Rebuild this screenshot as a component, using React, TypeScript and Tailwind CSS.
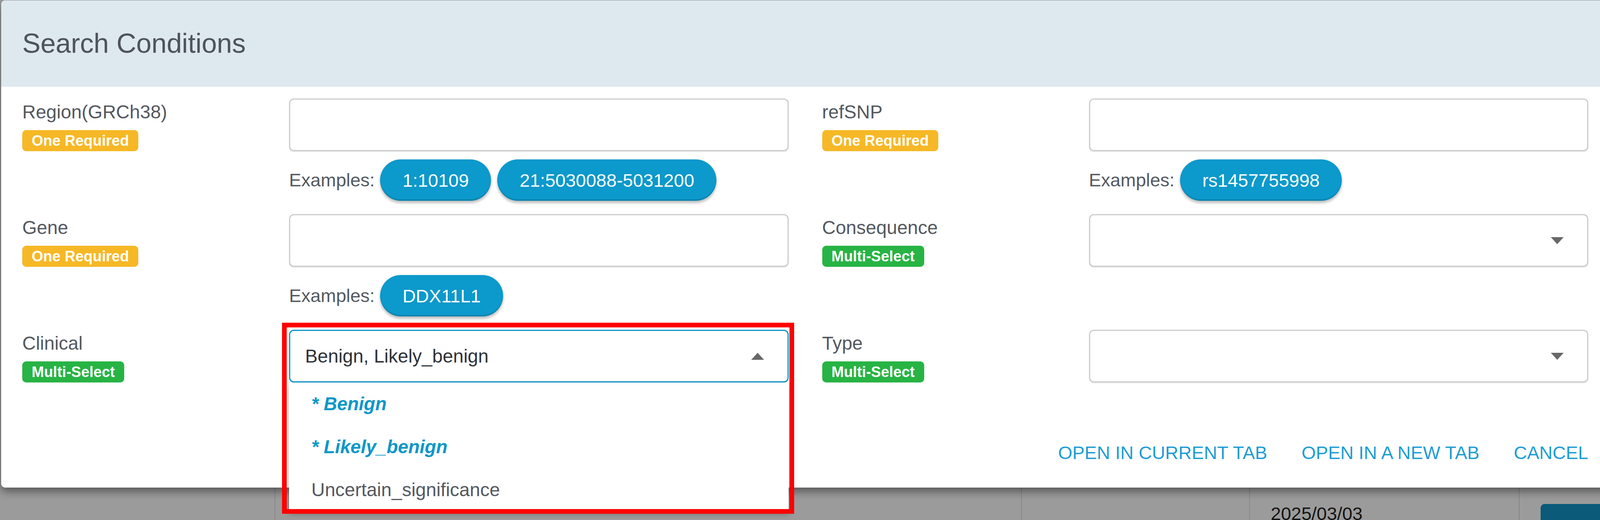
import React from 'react';

const FONT = "font-['Liberation_Sans',Arial,sans-serif]";

type BadgeKind = 'required' | 'multi';

const Badge: React.FC<{ kind: BadgeKind }> = ({ kind }) => (
  <span
    className={`mt-[11px] inline-flex h-[54px] items-center rounded-[10px] px-[24px] text-[38px] font-bold leading-none text-white ${
      kind === 'required' ? 'bg-[#f6b826]' : 'bg-[#27b444]'
    }`}
  >
    {kind === 'required' ? 'One Required' : 'Multi-Select'}
  </span>
);

const Caret: React.FC<{ up?: boolean }> = ({ up }) => (
  <svg width="33" height="18" viewBox="0 0 33 18" className="shrink-0">
    <polygon points={up ? '0,18 33,18 16.5,0' : '0,0 33,0 16.5,18'} fill="#686868" />
  </svg>
);

const TextInput: React.FC = () => (
  <div className="h-[135px] w-full rounded-[12px] border-[3px] border-[#cdcdcd] bg-white shadow-[0_2px_2px_rgba(0,0,0,0.1)]" />
);

const SelectBox: React.FC = () => (
  <div className="flex h-[135px] w-full items-center justify-end rounded-[12px] border-[3px] border-[#cdcdcd] bg-white pr-[60px] shadow-[0_2px_2px_rgba(0,0,0,0.1)]">
    <Caret />
  </div>
);

const Examples: React.FC<{ items: string[] }> = ({ items }) => (
  <div className="mt-[21px] flex items-center">
    <span className="text-[47px] text-[#54595f]">Examples:</span>
    <div className="ml-[14px] flex gap-[16px]">
      {items.map((item) => (
        <span
          key={item}
          className="flex h-[106px] items-center rounded-full bg-[#0c99cb] px-[57px] text-[47px] leading-none text-white shadow-[inset_0_-4px_0_rgba(0,0,0,0.12),0_6px_6px_rgba(0,0,0,0.2),0_2px_10px_rgba(0,0,0,0.1)]"
        >
          {item}
        </span>
      ))}
    </div>
  </div>
);

const Field: React.FC<{ label: string; kind: BadgeKind; children: React.ReactNode }> = ({ label, kind, children }) => (
  <div className="flex">
    <div className="flex w-[683px] shrink-0 flex-col items-start">
      <span className="text-[48px] leading-[70px] text-[#54595f]">{label}</span>
      <Badge kind={kind} />
    </div>
    <div className="min-w-0 flex-1">{children}</div>
  </div>
);

const clinicalOptions = [
  { label: 'Benign', selected: true },
  { label: 'Likely_benign', selected: true },
  { label: 'Uncertain_significance', selected: false },
];

const ClinicalSelect: React.FC = () => (
  <div className="relative">
    <div className="flex h-[135px] w-full items-center justify-between rounded-[12px] border-[3px] border-[#0a96c9] bg-white pl-[38px] pr-[60px]">
      <span className="text-[48px] text-[#2f3338]">Benign, Likely_benign</span>
      <Caret up />
    </div>
    <div className="absolute left-0 right-0 top-full z-10 bg-white shadow-[0_6px_14px_rgba(0,0,0,0.3)]">
      {clinicalOptions.map((opt) => (
        <div key={opt.label} className="flex h-[110px] items-center pl-[57px]">
          {opt.selected ? (
            <span className="text-[47.5px] font-bold italic text-[#0d97c9]">* {opt.label}</span>
          ) : (
            <span className="text-[48px] text-[#54595f]">{opt.label}</span>
          )}
        </div>
      ))}
    </div>
    <div className="pointer-events-none absolute -left-[18px] -top-[18px] z-20 h-[489px] w-[1311px] border-[12px] border-[#ff0000]" />
  </div>
);

export default function App() {
  return (
    <div className={`relative h-[1331px] w-[4125px] overflow-hidden bg-[#9b9b9b] ${FONT}`}>
      {/* page behind the dialog */}
      <div className="flex h-full flex-col justify-end">
        <div className="flex h-[300px]">
          <div className="w-[703px]" />
          <div className="w-[1911px] border-l-[2px] border-[#878787]" />
          <div className="w-[584px] border-l-[2px] border-[#878787]" />
          <div className="w-[690px] border-l-[2px] border-[#878787] pl-[53px] pt-[260px]">
            <span className="text-[47px] leading-none text-[#141414]">2025/03/03</span>
          </div>
          <div className="flex-1 border-l-[2px] border-[#878787] pl-[54px] pt-[259px]">
            <div className="h-[120px] w-full rounded-tl-[10px] bg-[#0b5a79]" />
          </div>
        </div>
      </div>

      {/* dialog */}
      <div className="absolute left-[3px] top-[1px] w-[4118px] rounded-[10px] bg-white shadow-[0_10px_22px_rgba(0,0,0,0.45)]">
        <div className="flex h-[221px] items-center rounded-t-[10px] bg-[#dee8ef] pl-[54px]">
          <h1 className="text-[70px] font-normal text-[#4e545b]">Search Conditions</h1>
        </div>

        <div className="pb-[45px] pl-[54px] pr-[55px] pt-[30px]">
          <div className="grid grid-cols-2 gap-x-[86px] gap-y-[34px]">
            <Field label="Region(GRCh38)" kind="required">
              <TextInput />
              <Examples items={['1:10109', '21:5030088-5031200']} />
            </Field>
            <Field label="refSNP" kind="required">
              <TextInput />
              <Examples items={['rs1457755998']} />
            </Field>
            <Field label="Gene" kind="required">
              <TextInput />
              <Examples items={['DDX11L1']} />
            </Field>
            <Field label="Consequence" kind="multi">
              <SelectBox />
            </Field>
            <Field label="Clinical" kind="multi">
              <ClinicalSelect />
            </Field>
            <Field label="Type" kind="multi">
              <SelectBox />
            </Field>
          </div>

          <div className="mt-[136px] flex h-[88px] items-center justify-end gap-[88px] text-[47px] text-[#1e9dd5]">
            <button type="button">OPEN IN CURRENT TAB</button>
            <button type="button">OPEN IN A NEW TAB</button>
            <button type="button">CANCEL</button>
          </div>
        </div>
      </div>
    </div>
  );
}
